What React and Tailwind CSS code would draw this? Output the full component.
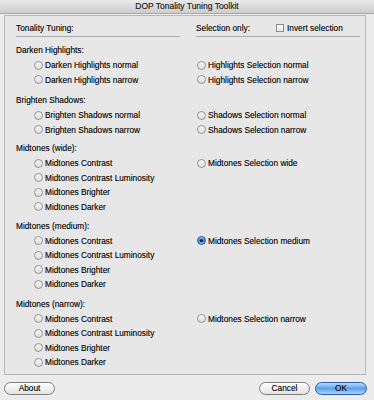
import React from 'react';

// DOP Tonality Tuning Toolkit — Aqua-style dialog

const sections = [
  {
    title: 'Darken Highlights:',
    mt: 'mt-[6px]',
    rows: [
      ['Darken Highlights normal', 'Highlights Selection normal'],
      ['Darken Highlights narrow', 'Highlights Selection narrow'],
    ],
  },
  {
    title: 'Brighten Shadows:',
    mt: 'mt-[6px]',
    rows: [
      ['Brighten Shadows normal', 'Shadows Selection normal'],
      ['Brighten Shadows narrow', 'Shadows Selection narrow'],
    ],
  },
  {
    title: 'Midtones (wide):',
    mt: 'mt-[4px]',
    rows: [
      ['Midtones Contrast', 'Midtones Selection wide'],
      ['Midtones Contrast Luminosity'],
      ['Midtones Brighter'],
      ['Midtones Darker'],
    ],
  },
  {
    title: 'Midtones (medium):',
    mt: 'mt-[4.5px]',
    rows: [
      ['Midtones Contrast', 'Midtones Selection medium', true],
      ['Midtones Contrast Luminosity'],
      ['Midtones Brighter'],
      ['Midtones Darker'],
    ],
  },
  {
    title: 'Midtones (narrow):',
    mt: 'mt-[5px]',
    rows: [
      ['Midtones Contrast', 'Midtones Selection narrow'],
      ['Midtones Contrast Luminosity'],
      ['Midtones Brighter'],
      ['Midtones Darker'],
    ],
  },
];

function Radio({ label, checked }) {
  return (
    <div className="flex items-center">
      {checked ? (
        <span className="flex items-center justify-center w-[9px] h-[9px] rounded-full border border-[#2a4f8f] bg-gradient-to-b from-[#9cc3f2] via-[#3f82dc] to-[#8dc0f5]">
          <span className="w-[3px] h-[3px] rounded-full bg-[#0d1a33]" />
        </span>
      ) : (
        <span className="w-[9px] h-[9px] rounded-full border border-[#939393] bg-gradient-to-b from-[#f6f6f6] to-[#dedede]" />
      )}
      <span className="ml-[2px]">{label}</span>
    </div>
  );
}

function Button({ children, primary, w }) {
  return (
    <div
      className={
        'flex items-center justify-center h-[13px] rounded-full border text-[8.3px] ' +
        w +
        (primary
          ? ' border-[#2d5ea8] bg-gradient-to-b from-[#bcdcfb] via-[#5ba0ec] to-[#a9d4fb] text-[#111]'
          : ' border-[#7d7d7d] bg-gradient-to-b from-[#ffffff] to-[#e2e2e2] text-[#111]')
      }
    >
      {children}
    </div>
  );
}

export default function App() {
  return (
    <div className="w-[374px] h-[400px] overflow-hidden bg-[#ececec] text-[8.3px] leading-none text-[#111] font-['Liberation_Sans',Arial,sans-serif] [text-shadow:0_0_0.4px_rgba(0,0,0,0.5)]">
      {/* Barre de titre */}
      <div className="h-[14px] flex items-center justify-center bg-gradient-to-b from-[#e9e9e9] to-[#cdcdcd] border-b border-[#a8a8a8] text-[#2a2a2a] text-[8.5px]">
        DOP Tonality Tuning Toolkit
      </div>

      {/* Group box */}
      <div className="mt-[1px] ml-[4px] w-[362px] h-[360px] box-border border border-[#b8b8b8] bg-[#e7e7e7] pt-[4px] pl-[11px]">
        <div className="grid grid-cols-[164px_164px] gap-x-[16px]">
          <div className="h-[17px] flex items-center border-b border-[#a9a9a9]">Tonality Tuning:</div>
          <div className="h-[17px] flex items-center border-b border-[#a9a9a9]">
            <span className="w-[80px]">Selection only:</span>
            <span className="w-[8px] h-[8px] border border-[#8a8a8a] bg-gradient-to-b from-[#ffffff] to-[#e4e4e4]" />
            <span className="ml-[3px]">Invert selection</span>
          </div>
        </div>

        {sections.map((s) => (
          <div key={s.title} className={s.mt}>
            <div className="h-[15px] flex items-center">{s.title}</div>
            {s.rows.map((r, i) => (
              <div key={i} className="grid grid-cols-[164px_164px] gap-x-[16px] h-[14.5px] items-center">
                <div className="pl-[18px]">
                  <Radio label={r[0]} />
                </div>
                <div className="pl-[1px]">{r[1] && <Radio label={r[1]} checked={r[2]} />}</div>
              </div>
            ))}
          </div>
        ))}
      </div>

      {/* Boutons */}
      <div className="mt-[7px] flex items-center pl-[4px] pr-[7px]">
        <Button w="w-[51px]">About</Button>
        <div className="flex-1" />
        <Button w="w-[51px]">Cancel</Button>
        <div className="w-[5px]" />
        <Button w="w-[52px]" primary>
          OK
        </Button>
      </div>
    </div>
  );
}
